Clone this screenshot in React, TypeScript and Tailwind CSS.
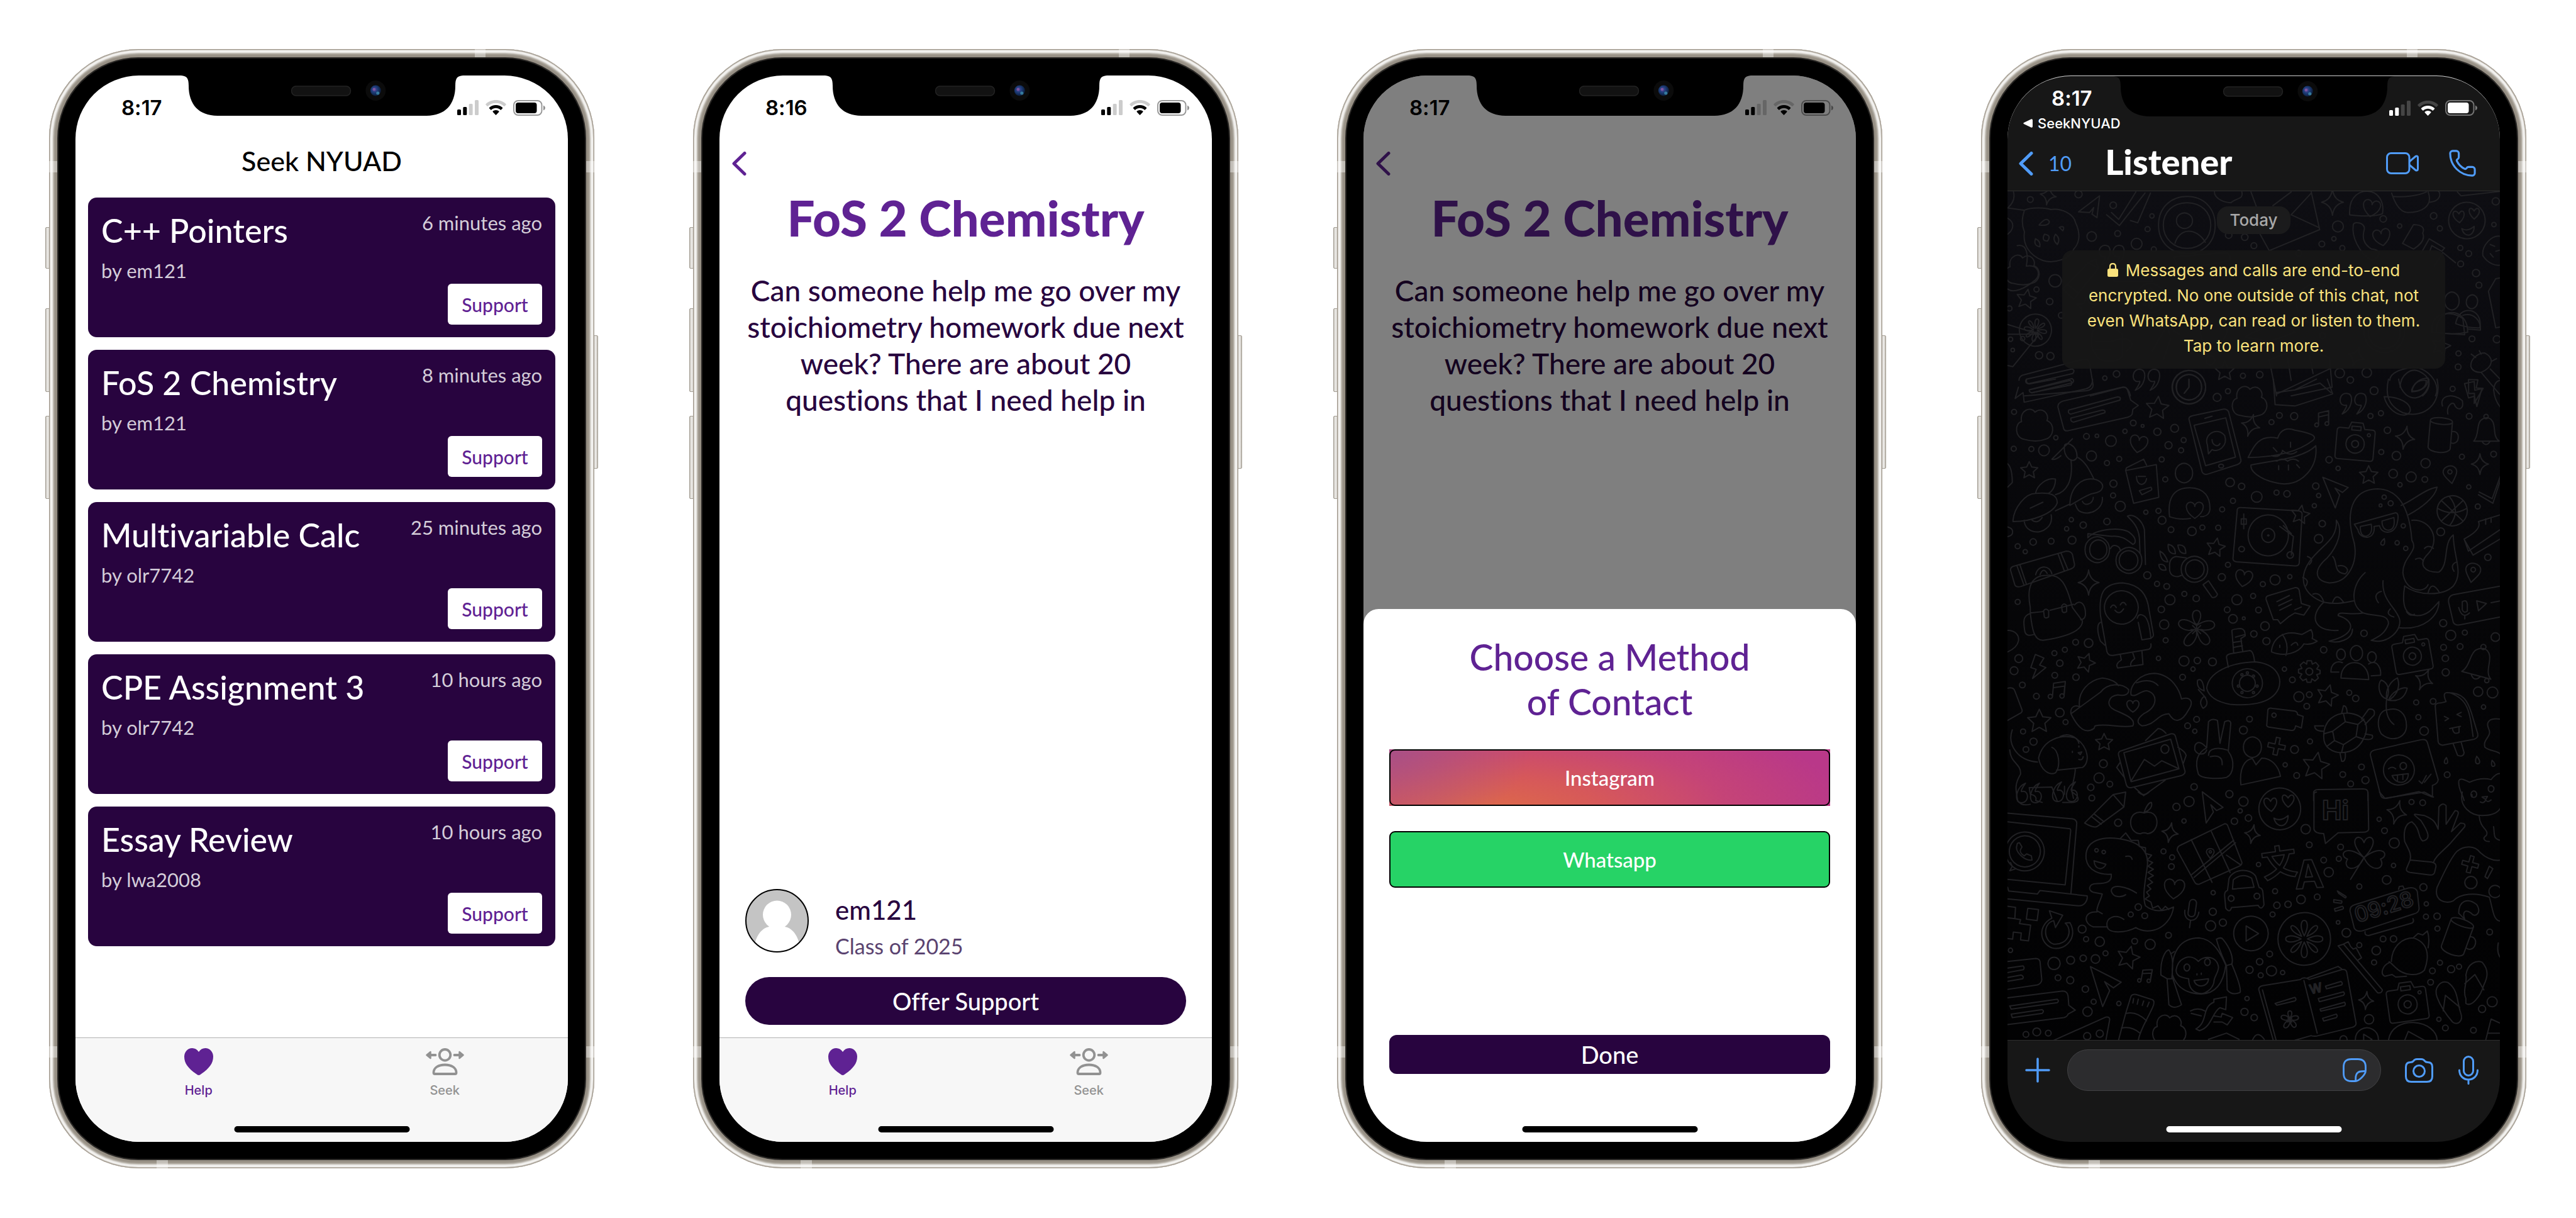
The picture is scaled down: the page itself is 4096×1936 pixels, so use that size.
import React from "react";
import { Phone } from "lucide-react";

/* ---------- Device ---------- */

function Notch() {
  return (
    <svg
      viewBox="0 0 449 65"
      className="absolute left-1/2 top-0 z-30 h-[65px] w-[448px] -translate-x-1/2"
      aria-hidden="true"
    >
      <defs>
        <radialGradient id="lens" cx="40%" cy="40%" r="65%">
          <stop offset="0" stopColor="#5a4a9a" />
          <stop offset="0.45" stopColor="#1c3c78" />
          <stop offset="1" stopColor="#0a1830" />
        </radialGradient>
      </defs>
      <path
        d="M0 0 C9 1 12 4 12 16 C12 46 28 64 58 64 H391 C421 64 437 46 437 16 C437 4 440 1 449 0 Z"
        fill="#000"
      />
      <rect x="176" y="17" width="94" height="15" rx="7" fill="#121212" stroke="#232323" strokeWidth="1.5" />
      <circle cx="310" cy="24" r="16" fill="#0b0b0b" />
      <circle cx="310" cy="24" r="8.5" fill="url(#lens)" />
      <circle cx="307.5" cy="22" r="2.4" fill="#8a5aa8" opacity="0.8" />
      <circle cx="313.5" cy="28" r="2.6" fill="#3f8fae" opacity="0.8" />
    </svg>
  );
}

function SideButton({ className }: { className: string }) {
  return (
    <span
      className={
        "absolute w-[8px] rounded-[2px] border border-[#a29c92] bg-gradient-to-r from-[#c9c5bd] via-[#f1f0ee] to-[#c4bfb6] " +
        className
      }
    />
  );
}

function Device({
  screenClass,
  indicatorClass,
  children,
}: {
  screenClass: string;
  indicatorClass: string;
  children: React.ReactNode;
}) {
  return (
    <section className="relative flex min-w-0 flex-col">
      <SideButton className="-left-[6px] top-[283px] h-[66px]" />
      <SideButton className="-left-[6px] top-[412px] h-[133px]" />
      <SideButton className="-left-[6px] top-[583px] h-[132px]" />
      <SideButton className="-right-[6px] top-[455px] h-[212px]" />
      <div className="relative flex flex-1 flex-col overflow-hidden rounded-[142px] bg-[#968f84] p-[13px] shadow-[inset_0_0_0_1px_#a39b90,inset_0_0_0_2px_#c5c0b8,inset_0_0_2px_6px_#f3f2f0,inset_0_0_3px_8px_#bdb8af]">
        <span className="absolute left-[677px] top-0 h-[13px] w-[17px] bg-white/40" />
        <span className="absolute bottom-0 left-[171px] h-[13px] w-[18px] bg-white/40" />
        <span className="absolute left-0 top-[178px] h-[18px] w-[13px] bg-white/40" />
        <span className="absolute right-0 top-[178px] h-[18px] w-[13px] bg-white/40" />
        <span className="absolute bottom-[176px] left-0 h-[18px] w-[13px] bg-white/40" />
        <span className="absolute bottom-[176px] right-0 h-[18px] w-[13px] bg-white/40" />
        <div className="relative flex flex-1 flex-col rounded-[129px] border-2 border-[#2a2826] bg-black p-[27px]">
          <div className={"relative flex flex-1 flex-col overflow-hidden rounded-[101px] " + screenClass}>
            <Notch />
            {children}
            <span
              className={
                "absolute bottom-[15px] left-1/2 z-30 h-[10px] w-[279px] -translate-x-1/2 rounded-full " + indicatorClass
              }
            />
          </div>
        </div>
      </div>
    </section>
  );
}

/* ---------- Status bar ---------- */

function StatusIcons() {
  return (
    <div className="flex items-center gap-[11px]" aria-hidden="true">
      <svg viewBox="0 0 34 24" className="h-[24px] w-[34px]" fill="currentColor">
        <rect x="0" y="15" width="6" height="9" rx="1.5" />
        <rect x="9.3" y="11" width="6" height="13" rx="1.5" />
        <rect x="18.6" y="6" width="6" height="18" rx="1.5" opacity="0.2" />
        <rect x="28" y="0" width="6" height="24" rx="1.5" opacity="0.2" />
      </svg>
      <svg viewBox="0 0 33 24" className="h-[24px] w-[33px]" fill="currentColor">
        <path
          d="M16.5 0 C10 0 4 2.6 .4 6.4 Q-.2 7 .4 7.6 L2.6 9.8 Q3.2 10.3 3.8 9.8 C7.2 6.5 11.6 4.7 16.5 4.7 S25.8 6.5 29.2 9.8 Q29.8 10.3 30.4 9.8 L32.6 7.6 Q33.2 7 32.6 6.4 C29 2.6 23 0 16.5 0Z"
          opacity="0.2"
        />
        <path d="M16.5 8 C12.5 8 8.8 9.5 6 12.1 Q5.4 12.7 6 13.3 L8.2 15.5 Q8.8 16 9.4 15.5 C11.4 13.7 13.8 12.7 16.5 12.7 S21.6 13.7 23.6 15.5 Q24.2 16 24.8 15.5 L27 13.3 Q27.6 12.7 27 12.1 C24.2 9.5 20.5 8 16.5 8Z" />
        <path d="M16.5 16 C14.7 16 13 16.7 11.7 17.8 Q11.1 18.4 11.7 19 L15.9 23.4 Q16.5 24 17.1 23.4 L21.3 19 Q21.9 18.4 21.3 17.8 C20 16.7 18.3 16 16.5 16Z" />
      </svg>
      <svg viewBox="0 0 51 25" className="h-[25px] w-[51px]" fill="currentColor">
        <rect x="1" y="1" width="44.5" height="23" rx="7" fill="none" stroke="currentColor" strokeWidth="2" opacity="0.4" />
        <rect x="4" y="4" width="33.5" height="17" rx="4" />
        <path d="M48 8.5 Q51 10 51 12.5 T48 16.5Z" opacity="0.45" />
      </svg>
    </div>
  );
}

function StatusBar({ time }: { time: string }) {
  return (
    <div className="flex h-[102px] items-center justify-between pl-[73px] pr-9 font-['Inter',sans-serif] text-black">
      <span className="text-[33px] leading-9 font-semibold">{time}</span>
      <StatusIcons />
    </div>
  );
}

/* ---------- Shared pieces ---------- */

function BackChevron() {
  return (
    <svg viewBox="0 0 23 38" className="h-[38px] w-[23px]" fill="none" stroke="currentColor" strokeWidth="5" strokeLinecap="round" strokeLinejoin="round" aria-hidden="true">
      <path d="M20 2.5 L3 19 L20 35.5" />
    </svg>
  );
}

function TabBar() {
  return (
    <nav className="grid grid-cols-2 border-t border-[#b2b2b2] bg-[#f7f7f7] pb-[70px] pt-4 font-['Inter',sans-serif] text-[20px] leading-6 font-medium">
      <button className="flex flex-col items-center gap-3 text-[#5f2293]">
        <svg viewBox="0 0 46 43" className="h-[43px] w-[46px]" fill="currentColor" aria-hidden="true">
          <path d="M23 43 C21.5 43 20.5 42 19 41 C6 32 0 24 0 13.5 C0 6 5.500 0 12.5 0 C17 0 20.5 2.3 23 6 C25.5 2.3 29 0 33.5 0 C40.5 0 46 6 46 13.5 C46 24 40 32 27 41 C25.5 42 24.5 43 23 43Z" />
        </svg>
        <span>Help</span>
      </button>
      <button className="flex flex-col items-center gap-3 text-[#929292]">
        <svg viewBox="0 0 61 43" className="h-[43px] w-[61px]" fill="none" stroke="currentColor" strokeWidth="3.8" strokeLinejoin="round" aria-hidden="true">
          <circle cx="30.5" cy="10.8" r="8.8" />
          <path d="M12.5 39 C12.5 31 20 26.5 30.5 26.5 S48.5 31 48.5 39 Q48.5 41 46.5 41 H14.5 Q12.5 41 12.5 39Z" />
          <path d="M15.5 11 H8 M45.5 11 H53" strokeLinecap="round" />
          <path d="M1.5 11 L7.5 6 V16Z M59.5 11 L53.5 6 V16Z" fill="currentColor" strokeWidth="2.5" />
        </svg>
        <span>Seek</span>
      </button>
    </nav>
  );
}

/* ---------- Screen 1: request list ---------- */

const requests = [
  { title: "C++ Pointers", by: "em121", when: "6 minutes ago" },
  { title: "FoS 2 Chemistry", by: "em121", when: "8 minutes ago" },
  { title: "Multivariable Calc", by: "olr7742", when: "25 minutes ago" },
  { title: "CPE Assignment 3", by: "olr7742", when: "10 hours ago" },
  { title: "Essay Review", by: "lwa2008", when: "10 hours ago" },
];

function RequestCard({ title, by, when }: { title: string; by: string; when: string }) {
  return (
    <li className="flex justify-between rounded-[14px] bg-[#28043f] px-[21px] pb-5 pt-[22px]">
      <div>
        <h2 className="text-[52px] leading-[60px] font-medium text-white">{title}</h2>
        <p className="mt-[16px] text-[31px] leading-9 text-[#d4cdd9]">by {by}</p>
      </div>
      <div className="flex flex-col items-end gap-[79px]">
        <time className="text-[31px] leading-9 text-[#d4cdd9]">{when}</time>
        <button className="flex h-[65px] w-[150px] items-center justify-center rounded-[6px] bg-white text-[30px] leading-9 font-medium text-[#5f2293]">
          Support
        </button>
      </div>
    </li>
  );
}

function ListScreen() {
  return (
    <Device screenClass="bg-white" indicatorClass="bg-black">
      <StatusBar time="8:17" />
      <h1 className="text-center text-[43px] leading-[67px] font-medium text-black">Seek NYUAD</h1>
      <ul className="flex flex-1 flex-col gap-5 px-5 pt-[25px]">
        {requests.map((r) => (
          <RequestCard key={r.title} {...r} />
        ))}
      </ul>
      <TabBar />
    </Device>
  );
}

/* ---------- Screen 2: request detail ---------- */

function DetailContent({ time }: { time: string }) {
  return (
    <>
      <StatusBar time={time} />
      <div className="px-5 pt-[19px]">
        <button aria-label="Back" className="flex text-[#5f2293]">
          <BackChevron />
        </button>
      </div>
      <h1 className="mt-[24px] text-center text-[78px] leading-[86px] font-black text-[#5f2293]">FoS 2 Chemistry</h1>
      <p className="mt-[44px] text-center text-[46px] leading-[58px] font-medium text-[#28043f]">
        Can someone help me go over my
        <br />
        stoichiometry homework due next
        <br />
        week? There are about 20
        <br />
        questions that I need help in
      </p>
    </>
  );
}

function Avatar() {
  return (
    <svg viewBox="0 0 101 101" className="h-[101px] w-[101px]" aria-hidden="true">
      <defs>
        <clipPath id="avatar-clip">
          <circle cx="50.5" cy="50.5" r="49" />
        </clipPath>
      </defs>
      <circle cx="50.5" cy="50.5" r="49.5" fill="#c4c4c4" />
      <g clipPath="url(#avatar-clip)" fill="#fff">
        <circle cx="50.5" cy="41" r="22.5" />
        <path d="M15.5 86 C19 70 30 60 40 60 H61 C71 60 82 70 85.5 86 V101 H15.5Z" />
      </g>
      <circle cx="50.5" cy="50.5" r="49.5" fill="none" stroke="#000" strokeWidth="2" />
    </svg>
  );
}

function DetailScreen() {
  return (
    <Device screenClass="bg-white" indicatorClass="bg-black">
      <DetailContent time="8:16" />
      <div className="flex-1" />
      <div className="flex items-start gap-[42px] px-[41px] pb-[29px]">
        <Avatar />
        <div className="flex flex-col gap-[13px] pt-2">
          <strong className="text-[42px] leading-[50px] font-medium text-[#28043f]">em121</strong>
          <span className="text-[34px] leading-10 text-[#5a4370]">Class of 2025</span>
        </div>
      </div>
      <div className="flex flex-col px-[41px] pb-5">
        <button className="h-[76px] rounded-full bg-[#28043f] text-[38px] leading-[44px] font-medium text-white">
          Offer Support
        </button>
      </div>
      <TabBar />
    </Device>
  );
}

/* ---------- Screen 3: contact sheet ---------- */

function ContactScreen() {
  return (
    <Device screenClass="bg-white" indicatorClass="bg-black">
      <DetailContent time="8:17" />
      <div className="absolute inset-0 z-10 bg-black/50" />
      <div
        role="dialog"
        aria-label="Choose a Method of Contact"
        className="absolute inset-x-0 bottom-0 z-20 flex h-1/2 flex-col rounded-t-[24px] bg-white px-[41px] pb-[108px] pt-[41px]"
      >
        <h2 className="text-center text-[57px] leading-[71px] font-medium text-[#5f2293]">
          Choose a Method
          <br />
          of Contact
        </h2>
        <div className="mt-[40px] flex flex-1 flex-col gap-10 text-[33px] leading-10 font-medium text-white">
          <button className="flex h-[90px] bg-[radial-gradient(ellipse_32%_150%_at_0%_0%,#a1528bcc,transparent),radial-gradient(ellipse_80%_210%_at_24%_115%,#de6b48_0%,#d6585a_32%,#c54477_66%,#b93889_100%)]">
            <span className="flex flex-1 items-center justify-center self-stretch rounded-[9px] border-2 border-black">
              Instagram
            </span>
          </button>
          <button className="h-[90px] rounded-[9px] border-2 border-black bg-[#26d366]">Whatsapp</button>
        </div>
        <button className="h-[62px] rounded-[12px] bg-[#28043f] text-[38px] leading-[44px] font-medium text-white">
          Done
        </button>
      </div>
    </Device>
  );
}

/* ---------- Screen 4: chat ---------- */

type Band = { sx: number; sy: number; tx: number; ty: number };
const TOP: Band = { sx: 0.5805, sy: 0.3628, tx: -59.8, ty: -243.8 };
const MID: Band = { sx: 0.572, sy: 0.42685, tx: -46.4, ty: 298.4 };
const LOW: Band = { sx: 0.572, sy: 0.3927, tx: -46.4, ty: 954.3 };

const starPath = (() => {
  let d = "";
  for (let i = 0; i < 10; i++) {
    const r = i % 2 ? 24 : 50;
    const a = (Math.PI / 5) * i - Math.PI / 2;
    d += (i ? "L" : "M") + (r * Math.cos(a)).toFixed(1) + " " + (r * Math.sin(a)).toFixed(1);
  }
  return d + "Z";
})();

const shapes: Record<string, string> = {
  star: starPath,
  sparkle: "M0 -60 Q6 -10 50 0 Q6 10 0 60 Q-6 10 -50 0 Q-6 -10 0 -60Z",
  heart: "M0 48 C-65 5 -52 -42 -24 -42 C-8 -42 0 -28 0 -18 C0 -28 8 -42 24 -42 C52 -42 65 5 0 48Z",
  cloud: "M-30 45 C-58 42 -58 -2 -38 -5 C-45 -38 -10 -50 0 -32 C22 -50 42 -25 34 -8 C58 0 55 40 28 45 C10 52 -12 50 -30 45Z",
  note: "M-28 35 A12 12 0 1 1 -28 34 V-40 L36 -55 V22 A12 12 0 1 1 35 20 V-30 L-26 -16",
  camera:
    "M-42 -32 H-20 L-14 -48 H16 L22 -32 H42 Q50 -32 50 -24 V42 Q50 50 42 50 H-42 Q-50 50 -50 42 V-24 Q-50 -32 -42 -32Z M24 8 A24 24 0 1 1 24 7.9Z M9 8 A9 9 0 1 1 9 7.9Z M38 -18 A4 4 0 1 1 38 -18.1Z M-12 -38 H12 V-28 H-12Z",
  bell: "M-45 40 C-25 20 -35 -20 -20 -35 C-5 -50 15 -50 25 -30 C35 -10 25 25 48 40Z M-14 42 Q0 62 14 42 M8 -50 A8 8 0 1 1 8 -50.1Z",
  pin: "M0 60 C-30 20 -45 0 -45 -18 C-45 -70 45 -70 45 -18 C45 0 30 20 0 60Z M14 -18 A14 14 0 1 1 14 -18.1Z",
  mug: "M-40 -45 C-40 -60 30 -60 30 -45 C30 -32 -40 -32 -40 -45Z M-40 -45 V40 C-35 58 25 58 30 40 V-45 M30 -15 C60 -25 60 30 30 20",
  bolt: "M-25 -60 L20 -50 L5 -12 L38 -5 L-18 60 L-8 12 L-36 8Z",
  plane: "M-35 -60 L45 0 L20 12 L-2 -10 L8 18 L-20 60Z",
  quote: "M-10 -30 C-50 -45 -55 20 -22 12 C-15 10 -22 25 -36 45 C0 30 8 -20 -10 -30Z M45 -30 C5 -45 0 20 33 12 C40 10 33 25 19 45 C55 30 63 -20 45 -30Z",
  flower: "M0 -10 C-35 -60 35 -60 0 -10 C50 -45 65 10 8 0 C60 25 15 65 2 8 C-10 65 -60 35 -8 2 C-65 5 -50 -50 0 -10Z M-14 0 H14 M0 -14 V14 M-10 -10 L10 10 M10 -10 L-10 10",
  person: "M22 -40 A22 27 0 1 1 22 -40.1Z M-48 55 C-48 -25 48 -25 48 55 Q0 65 -48 55Z",
  wheel: "M50 0 A50 50 0 1 1 50 -.1Z M0 -6 C-20 -45 20 -45 0 -6Z M0 6 C-20 45 20 45 0 6Z M-6 0 C-45 -20 -45 20 -6 0Z M6 0 C45 -20 45 20 6 0Z M-5 -5 C-20 -42 -42 -20 -5 -5Z M5 5 C20 42 42 20 5 5Z M5 -5 C42 -20 20 -42 5 -5Z M-5 5 C-42 20 -20 42 -5 5Z",
  mic: "M-14 -40 C-14 -60 14 -60 14 -40 V0 C14 18 -14 18 -14 0Z M-28 -8 C-28 40 28 40 28 -8 M0 30 V58",
  smile: "M50 0 A50 50 0 1 1 50 -.1Z M-14 22 Q2 32 20 16 C20 46 -8 48 -14 22Z M-20 6 C-52 -14 -34 -38 -22 -18 C-12 -38 4 -16 -20 6Z M20 -4 C-4 -24 8 -44 20 -26 C30 -44 46 -24 20 -4Z",
  car: "M-46 30 V0 Q-46 -10 -38 -12 L-32 -40 C-20 -62 20 -62 32 -40 L38 -12 Q46 -10 46 0 V30 Q38 44 32 30 H-32 Q-38 44 -46 30Z M-26 -14 L-22 -36 Q0 -52 22 -36 L26 -14Z M-24 8 A7 7 0 1 1 -24 7.9Z M38 8 A7 7 0 1 1 38 7.9Z",
  play: "M50 0 A50 50 0 1 1 50 -.1Z M-14 -22 L22 0 L-14 22Z",
  clock: "M50 0 A50 50 0 1 1 50 -.1Z M38 0 A38 38 0 1 1 38 -.1Z M0 -24 V0 L-14 18",
  ring: "M50 0 A50 50 0 1 1 50 -.1Z M40 0 A40 40 0 1 1 40 -.1Z",
  gear: "M-10 -50 H10 L14 -34 L30 -42 L44 -26 L34 -12 L50 -6 V10 L34 14 L42 30 L26 44 L12 34 L8 50 H-10 L-14 34 L-30 42 L-44 26 L-34 12 L-50 6 V-10 L-34 -14 L-42 -30 L-26 -44 L-12 -34Z M16 0 A16 16 0 1 1 16 -.1Z",
  ball: "M50 0 A50 50 0 1 1 50 -.1Z M-36 -34 L36 34 M36 -34 L-36 34 M-10 -48 Q30 0 -8 48 M-48 -8 Q0 20 48 -8",
  plus: "M-10 -45 H10 V-12 H44 V10 H12 V45 H-10 V12 H-44 V-10 H-10Z",
  drop: "M0 -50 C30 -5 38 45 0 45 C-38 45 -30 -5 0 -50Z",
  apple: "M0 -22 C-60 -40 -60 50 -12 50 Q0 44 12 50 C60 45 55 -40 0 -22Z M0 -24 C10 -50 20 -60 26 -58 C30 -40 15 -28 0 -24",
  clover: "M0 0 C-50 -50 -10 -70 0 -40 C10 -70 50 -50 0 0 C50 -40 70 -5 44 4 C60 30 20 45 0 0 C-20 45 -60 30 -44 4 C-70 -5 -50 -40 0 0 L-36 58",
};

/* [shape, x, y, width, rotation] */
type Item = [string, number, number, number, number];

const topItems: Item[] = [
  ["sparkle", 215, 690, 44, 10], ["plane", 335, 750, 60, 60], ["sparkle", 993, 720, 60, 0],
  ["smile", 1361, 800, 100, 0], ["heart", 1128, 872, 50, -10], ["heart", 1100, 745, 50, 10],
  ["star", 155, 1145, 56, 10], ["wheel", 180, 1280, 88, 10], ["quote", 385, 945, 70, 0],
  ["quote", 480, 1490, 74, 0], ["star", 698, 1460, 56, 0], ["clock", 600, 1530, 92, 0],
  ["sparkle", 1058, 1395, 46, 20], ["star", 1290, 1350, 54, 15], ["bolt", 1385, 1545, 56, -10],
  ["cloud", 145, 1010, 90, 0], ["person", 1320, 1210, 90, 0], ["person", 1370, 1200, 70, 10],
  ["star", 320, 1180, 56, 0], ["wheel", 495, 1140, 80, 0], ["ring", 950, 1165, 110, 0], ["ring", 1135, 1290, 110, 0],
];
const midItems: Item[] = [
  ["star", 498, 108, 66, 5], ["cloud", 158, 165, 98, 0], ["cloud", 755, 78, 94, 0], ["clock", 586, 30, 92, 0],
  ["sparkle", 757, 172, 52, 15], ["note", 958, 150, 44, 0], ["quote", 1038, 85, 74, 0], ["bolt", 1380, 52, 60, -25],
  ["camera", 1048, 230, 106, 5], ["sparkle", 1186, 218, 54, 10], ["mug", 1288, 210, 88, 5], ["bell", 1411, 190, 76, 0],
  ["sparkle", 1394, 316, 48, 0], ["heart", 446, 240, 52, 10], ["star", 142, 340, 50, 0], ["star", 1085, 358, 54, 0],
  ["pin", 1312, 355, 42, -10], ["plane", 995, 415, 76, -15], ["ball", 1317, 490, 84, 0], ["heart", 602, 486, 50, 0],
  ["star", 895, 505, 54, 10], ["star", 660, 627, 54, 10], ["heart", 738, 740, 50, 10],
  ["sparkle", 307, 757, 58, 0], ["pin", 1374, 720, 46, 10], ["flower", 607, 932, 112, 0], ["bolt", 167, 1072, 56, 10],
  ["star", 299, 1055, 54, 20], ["note", 222, 1160, 50, 5], ["star", 170, 1274, 68, 0], ["star", 350, 1352, 50, 0],
  ["gear", 920, 1088, 60, 0], ["camera", 1205, 1020, 104, -10], ["bell", 1392, 1055, 90, 15], ["sparkle", 1239, 1118, 52, 25],
  ["star", 970, 1178, 62, 15], ["star", 938, 1440, 78, 10], ["plus", 829, 1366, 54, 12],
  ["heart", 430, 1216, 36, 0], ["drop", 1300, 1420, 18, 5], ["drop", 1387, 1418, 22, -10], ["drop", 1430, 1430, 18, -15],
  ["drop", 1125, 606, 20, 20],
];
const lowItems: Item[] = [
  ["quote", 145, 10, 70, 180], ["quote", 245, 5, 70, 180], ["apple", 461, 110, 80, 0], ["sparkle", 533, 164, 46, 10],
  ["sparkle", 762, 170, 44, 10], ["plane", 648, 62, 72, 0], ["smile", 838, 68, 116, 0], ["sparkle", 1163, 82, 56, 15],
  ["heart", 545, 390, 60, 5], ["mic", 593, 490, 70, 8], ["car", 738, 412, 116, -5], ["play", 758, 572, 96, 0],
  ["wheel", 906, 594, 146, 0], ["clover", 1072, 265, 104, 0], ["star", 417, 670, 66, 15], ["note", 466, 746, 40, 10],
  ["plane", 355, 780, 96, -10], ["cloud", 532, 955, 90, 0], ["flower", 866, 922, 54, 0], ["sparkle", 1078, 843, 42, 5],
  ["camera", 1192, 846, 110, -8], ["mug", 1335, 590, 94, 20], ["play", 1080, 1000, 64, 0], ["plus", 1367, 292, 52, 15],
  ["ring", 130, 240, 108, 0], ["pin", 645, 248, 24, 0],
];

/* [x, y, radius] triples */
const topDots = [
  [166, 708, 8], [298, 685, 10], [393, 733, 9], [499, 780, 6], [487, 838, 7], [405, 857, 8], [334, 870, 13], [457, 902, 15],
  [504, 926, 7], [709, 864, 9], [753, 873, 9], [778, 910, 8], [1008, 826, 15], [1132, 793, 9], [1177, 824, 6], [1270, 780, 9],
  [1287, 835, 7], [1440, 716, 10], [1435, 818, 6], [964, 903, 8], [1020, 921, 7], [997, 880, 6], [1343, 920, 7], [1366, 945, 8],
  [1344, 990, 8], [1394, 1083, 8], [1386, 1030, 10], [234, 1064, 17], [183, 1102, 7], [219, 1155, 9], [251, 1215, 8],
  [109, 1185, 7], [190, 1390, 10], [221, 1394, 10], [145, 1317, 6], [118, 1367, 5], [370, 1490, 6], [402, 1472, 9],
  [748, 1480, 7], [794, 1475, 9], [1013, 1468, 13], [1087, 1466, 13], [1042, 1498, 9], [1375, 1318, 8], [1443, 1320, 10],
  [1337, 1441, 8], [1338, 1382, 7], [1322, 1537, 7], [901, 943, 8], [659, 1412, 12], [966, 1305, 8], [112, 1320, 6],
];
const midDots = [
  [100, 122, 7], [664, 68, 11], [694, 45, 7], [431, 163, 8], [457, 174, 4], [408, 194, 6], [498, 196, 10], [546, 183, 11],
  [571, 227, 7], [529, 246, 10], [564, 265, 7], [216, 218, 6], [301, 213, 8], [330, 211, 5], [369, 230, 15], [183, 265, 15],
  [148, 260, 7], [99, 259, 7], [315, 286, 14], [392, 297, 7], [358, 312, 7], [510, 299, 7], [837, 135, 8], [878, 138, 10],
  [815, 160, 7], [1100, 43, 11], [1090, 137, 7], [1119, 127, 7], [1137, 190, 9], [1120, 271, 7], [1162, 285, 12],
  [1364, 138, 8], [975, 300, 9], [1000, 332, 6], [1243, 313, 13], [1344, 289, 7], [1432, 279, 8], [1153, 352, 12],
  [1203, 364, 14], [1241, 373, 8], [1172, 393, 6], [700, 384, 12], [732, 399, 9], [774, 438, 15], [829, 422, 7], [858, 427, 9],
  [708, 453, 7], [678, 485, 7], [520, 373, 7], [376, 389, 10], [375, 433, 7], [395, 473, 14], [466, 495, 6], [501, 490, 7],
  [511, 525, 11], [536, 560, 8], [594, 566, 12], [623, 552, 7], [667, 553, 7], [358, 530, 9], [259, 523, 6], [292, 543, 9],
  [246, 557, 6], [153, 606, 9], [203, 603, 8], [261, 599, 11], [110, 622, 7], [131, 642, 6], [938, 398, 9], [946, 433, 6],
  [934, 471, 6], [956, 538, 9], [946, 594, 12], [1363, 401, 6], [1388, 474, 7], [1285, 568, 11], [1416, 663, 9],
  [694, 691, 7], [677, 737, 10], [791, 763, 7], [825, 747, 14], [866, 735, 6], [470, 730, 10], [497, 762, 7], [524, 771, 8],
  [533, 821, 14], [573, 799, 7], [606, 816, 9], [509, 857, 9], [719, 821, 14], [764, 807, 7], [692, 858, 8], [779, 859, 8],
  [708, 892, 12], [738, 890, 4], [517, 913, 13], [521, 972, 7], [797, 919, 12], [766, 948, 9], [801, 975, 10], [110, 829, 7],
  [271, 979, 8], [307, 982, 12], [241, 1007, 7], [212, 1020, 7], [113, 1040, 11], [227, 1057, 9], [100, 1085, 11],
  [213, 1102, 8], [272, 1109, 9], [123, 1138, 8], [162, 1180, 8], [227, 1241, 12], [243, 1276, 7], [125, 1311, 7],
  [154, 1349, 10], [133, 1378, 8], [501, 1039, 6], [572, 1049, 14], [609, 1047, 9], [651, 1052, 11], [597, 1079, 6],
  [568, 1109, 8], [851, 1079, 6], [873, 1119, 8], [960, 1007, 9], [891, 1182, 14], [920, 1174, 8], [913, 1217, 8],
  [1031, 1167, 7], [1049, 1188, 9], [1293, 998, 8], [1339, 995, 8], [1298, 1039, 9], [1299, 1091, 10], [1413, 1122, 6],
  [1389, 1163, 13], [1429, 1166, 15], [1217, 1203, 7], [1264, 1199, 8], [1223, 1258, 7], [1404, 1220, 6], [1239, 1309, 12],
  [1313, 953, 14], [1352, 943, 7], [1437, 960, 12], [1292, 908, 10], [754, 1265, 8], [737, 1306, 11], [607, 1266, 8],
  [582, 1290, 8], [602, 1310, 6], [879, 1378, 11], [853, 1435, 6], [922, 1348, 7], [885, 1475, 8], [348, 1431, 11],
  [336, 1484, 14], [366, 1507, 8], [313, 1519, 9], [600, 1517, 9], [1065, 1443, 8], [1013, 1471, 8], [1035, 1506, 8],
  [1076, 1492, 10], [1303, 1472, 8], [1128, 439, 6], [1146, 462, 7], [1118, 470, 4], [1181, 546, 6], [1164, 609, 6], [1188, 630, 6],
  [723, 1142, 3], [775, 1142, 3], [733, 1166, 3], [765, 1166, 3], [733, 1100, 3], [765, 1105, 3], [748, 1093, 3], [1072, 946, 9],
];
const lowDots = [
  [389, 124, 10], [586, 38, 14], [551, 60, 10], [572, 117, 6], [737, 38, 13], [728, 76, 6], [751, 105, 9], [712, 118, 9],
  [698, 8, 10], [316, 24, 8], [910, 150, 13], [1129, 156, 8], [1156, 206, 14], [1204, 40, 7], [1235, 43, 8], [1114, 110, 6],
  [515, 240, 7], [539, 264, 7], [537, 301, 8], [920, 213, 8], [960, 275, 8], [1007, 222, 8], [1002, 270, 7], [974, 324, 13],
  [779, 293, 6], [1154, 297, 6], [1135, 355, 12], [1237, 385, 10], [1059, 382, 7], [825, 401, 7], [653, 407, 6],
  [897, 434, 12], [942, 424, 8], [861, 454, 9], [830, 458, 9], [818, 495, 7], [652, 484, 10], [646, 541, 14], [680, 528, 10],
  [445, 465, 9], [424, 495, 7], [463, 500, 8], [289, 554, 11], [300, 595, 7], [338, 605, 13], [435, 603, 8], [478, 616, 14],
  [529, 579, 8], [354, 652, 7], [326, 675, 12], [292, 672, 9], [257, 680, 11], [211, 693, 17], [222, 751, 8], [256, 761, 10],
  [90, 640, 6], [298, 797, 9], [321, 848, 7], [391, 855, 6], [304, 888, 13], [303, 987, 10], [338, 977, 10], [133, 980, 8],
  [163, 970, 11], [195, 975, 8], [747, 835, 6], [740, 889, 10], [767, 912, 9], [782, 686, 9], [810, 655, 8], [754, 719, 10],
  [815, 723, 14], [785, 741, 7], [846, 730, 6], [1000, 527, 5], [1023, 569, 12], [1106, 641, 12], [1100, 689, 7],
  [1125, 594, 8], [1154, 594, 9], [1059, 619, 7], [1245, 452, 6], [1244, 504, 7], [1275, 502, 9], [1276, 552, 7],
  [1283, 690, 7], [1262, 723, 8], [1314, 716, 10], [1336, 706, 7], [1257, 769, 8], [1421, 566, 8], [1428, 848, 14],
  [1400, 877, 10], [1280, 919, 6], [1298, 954, 8], [1376, 963, 8], [1086, 919, 13], [1015, 1000, 10], [1369, 366, 17],
  [1436, 402, 17],
];

const topPaths = [
  "M104 745 L150 755 C170 740 210 745 222 752 C250 745 285 770 290 810 C305 860 300 900 285 925 C275 970 230 990 200 975 C160 950 145 900 150 850 C140 810 145 780 150 755",
  "M190 820 q20 -40 28 -15 q0 20 -28 15Z M205 860 q20 5 8 30 q-18 0 -8 -30Z M235 860 q15 20 5 45 q-15 -20 -5 -45Z M180 880 q15 10 12 35 q-18 -5 -12 -35Z M245 830 q18 -10 10 15Z",
  "M375 775 L410 822 L480 680 M388 765 L408 795 L455 675 M440 800 L460 810 L495 680",
  "M595 695 C640 695 672 745 672 820 C672 895 640 945 595 945 C550 945 517 895 517 820 C517 745 550 695 595 695Z",
  "M595 722 C635 722 660 765 660 820 C660 880 630 922 595 922 C560 922 530 880 530 820 C530 765 555 722 595 722Z M610 802 A22 34 0 1 1 610 800Z M562 900 C575 830 620 830 645 895",
  "M670 675 C670 700 690 720 715 722 C730 700 750 710 745 675 M770 675 L785 740 M935 675 L958 840 L820 932 L795 860 M880 775 L935 680 M880 775 L955 830 M830 735 L880 675",
  "M1040 760 C1040 690 1070 670 1090 672 C1120 675 1135 720 1130 770 C1110 785 1060 780 1040 775Z",
  "M1155 680 C1165 730 1180 765 1200 765 C1235 765 1270 740 1255 675 M1260 720 C1290 715 1290 680 1283 672 M1160 695 C1190 700 1230 690 1250 675",
  "M1050 820 C1045 870 1065 940 1100 975 C1125 960 1130 930 1100 925 C1075 900 1075 870 1080 840 C1085 810 1050 800 1050 820Z",
  "M1455 870 C1430 860 1400 910 1405 955 C1420 990 1440 1000 1455 995 M1425 905 l12 8 M1440 935 l10 -5 M1425 945 l8 15",
  "M255 1100 L325 985 L352 1010 L285 1145 Z M268 1080 L298 1118 M325 985 L345 970 L352 1010",
  "M560 960 L700 940 Q715 945 712 975 L570 1020Z M390 1010 H500 V1065 H395Z",
  "M335 1300 C330 1260 400 1255 418 1300 V1395 C400 1430 350 1420 345 1385 C330 1360 335 1330 335 1300Z M345 1330 H385 M345 1365 H385 M385 1330 C440 1300 460 1340 430 1370",
  "M500 1370 L540 1260 L575 1300 M520 1280 L540 1255 L548 1300 M530 1410 L550 1320",
  "M104 1255 L190 1298 L118 1440 L104 1435 M104 1298 L190 1298",
  "M135 1500 Q135 1480 150 1475 L310 1408 Q325 1405 328 1425 L338 1520 Q338 1540 320 1545 L150 1568 M155 1495 L280 1450 Q290 1455 282 1470 L160 1515 Q150 1510 155 1495Z M165 1540 L280 1492 Q288 1500 282 1510 L170 1555",
  "M330 1568 L420 1530 Q435 1530 440 1568",
  "M820 1410 L900 1360 L985 1400 L992 1530 L880 1568 M820 1410 L840 1568 M870 1400 L880 1500 M930 1390 L940 1470 M840 1560 L985 1450",
  "M1150 1500 C1150 1465 1180 1450 1215 1442 C1260 1450 1290 1520 1275 1568 M1178 1530 C1180 1470 1210 1445 1230 1460 C1270 1490 1260 1540 1240 1568 M1210 1540 C1220 1500 1240 1490 1255 1490 C1255 1530 1235 1550 1210 1550Z",
  "M1372 1440 C1370 1400 1395 1380 1410 1380 C1435 1400 1435 1440 1400 1465 C1385 1465 1375 1455 1372 1440Z M1400 1465 L1450 1560 M1425 1450 L1455 1500 M1385 1400 l-12 -15 M1400 1385 l-5 -15 M1430 1415 l12 -10",
  "M1265 1290 C1260 1200 1320 1190 1350 1230 L1355 1300Z M1350 1215 C1380 1200 1400 1240 1398 1280 L1365 1275",
  "M1420 1110 L1440 1055 L1455 1050 M1420 1110 L1440 1270 L1455 1265",
  "M1335 675 L1345 692 L1455 672 M1185 900 L1215 818 Q1250 820 1240 855 Q1250 890 1215 925Z",
  "M1235 945 L1258 880 L1300 920 L1292 935 L1265 910 L1258 940 M1272 1000 L1295 940 L1330 985",
  "M104 790 C125 810 120 840 104 860 M120 675 C125 705 115 730 104 745",
  "M130 910 C160 900 160 960 155 1000 C190 990 195 1040 180 1060 C150 1100 120 1120 104 1100",
  "M640 1330 C620 1290 640 1210 680 1260 C700 1200 720 1280 690 1330Z M755 1310 C790 1270 870 1230 890 1290 L820 1330Z",
];
const midPaths = [
  "M103 72 L125 50 L128 86 L300 36 Q318 30 318 0 M103 72 L112 30 M135 0 Q132 15 142 18 L215 0 M142 40 L255 5 Q265 10 258 22 L150 50 Q142 50 142 40Z",
  "M222 105 Q220 90 235 82 L400 30 Q412 27 415 40 L424 78 L445 98 L430 112 L428 130 Q425 138 415 142 L250 192 Q240 194 238 185Z",
  "M252 115 L388 66 Q398 66 394 78 L258 130 Q248 128 252 115Z M258 145 L345 115 Q355 115 352 125 L265 160 Q256 158 258 145Z",
  "M586 150 Q584 140 596 136 L680 112 Q692 110 696 122 L730 300 Q732 312 720 318 L636 354 Q626 356 622 344Z M600 172 L688 144 L715 290 L632 322Z M682 324 A7 7 0 1 1 682 323Z M630 146 L650 138",
  "M640 278 L637 245 C625 205 665 175 685 210 C695 250 665 275 650 262Z M650 225 C650 245 665 255 672 240",
  "M750 292 C765 250 780 205 832 220 C840 185 860 180 880 190 C920 200 945 210 930 228 C890 270 830 290 750 292Z M938 248 C945 330 900 390 850 390 C800 385 755 350 758 320 C800 305 900 300 938 248Z M815 285 q20 10 30 -15 M845 265 q20 25 40 5 M830 305 q15 -15 30 0 q15 -15 30 0 M835 322 v15 M862 320 v18 M885 318 l8 12 M820 255 l10 15 M868 235 v18",
  "M410 340 L495 318 L502 440 L432 462Z M410 340 L412 330 L460 298 L468 320 M440 362 C440 400 465 400 468 370 M445 362 l20 0 M448 415 L480 402 q5 8 0 12 L455 430Z",
  "M596 350 A24 36 0 1 1 596 349Z M532 512 C525 440 545 404 588 404 C630 405 645 440 644 485 C642 505 630 512 618 512 M532 512 Q560 525 590 518",
  "M205 298 L262 222 M205 298 Q215 302 230 285 M240 250 C240 230 275 240 275 290 C265 320 235 290 240 250Z M278 292 C300 310 310 340 322 372 M258 300 C265 380 245 420 215 430 M97 525 C100 480 130 425 160 425 C200 420 220 430 220 460 C210 500 150 530 97 530Z M160 422 C165 395 190 365 215 372 C215 400 205 420 195 425 M145 480 L180 458 M255 470 C255 400 290 360 330 375 C355 390 350 420 320 425 C300 430 270 460 255 470Z M345 440 C350 480 310 515 280 490 C272 478 272 470 270 465 M320 440 C320 465 295 475 290 455 M128 525 C130 570 170 580 190 555 C205 540 205 520 203 505 M215 490 L255 465 M150 525 q15 15 28 -10",
  "M365 635 A34 48 0 1 1 365 634Z M358 635 A24 36 0 1 1 358 634Z M455 675 A36 48 0 1 1 455 674Z M444 675 A26 36 0 1 1 444 674Z M305 590 C330 555 400 550 420 570 C440 590 440 610 430 615 C415 600 400 580 370 585 L305 575Z M415 510 C430 500 455 520 462 560 L465 690 M415 510 C430 530 445 550 448 590 L450 650 M368 630 C375 610 395 620 395 640",
  "M720 485 Q722 476 732 478 L890 490 Q900 492 900 502 L892 685 Q890 696 880 695 L718 680 Q708 678 708 668Z M862 582 A56 76 0 1 1 862 581Z M824 582 A18 26 0 1 1 824 581Z M808 582 A2 2 0 1 1 808 581Z M838 548 L876 585 L870 655 M848 545 L870 575 M876 655 A9 12 0 1 1 876 654Z M738 502 v55 M731 520 h14 v20 h-14Z M740 633 A8 10 0 1 1 740 632Z",
  "M1045 610 C1020 500 1035 410 1110 408 C1180 410 1200 510 1205 600 C1225 640 1180 660 1180 720 C1185 790 1240 800 1250 765 M1045 540 L1160 497 Q1170 500 1165 530 C1160 580 1120 580 1115 545 L1100 548 C1105 600 1060 600 1055 560Z M1062 548 L1092 540 Q1098 580 1075 585 Q1060 580 1062 548Z M1122 528 L1155 515 Q1160 560 1140 562 Q1122 560 1122 528Z",
  "M1175 470 C1210 450 1240 410 1275 402 C1270 440 1230 480 1195 505 M1205 525 C1260 520 1285 600 1250 650 C1220 690 1240 720 1280 718 C1310 690 1290 610 1320 580 C1320 660 1350 720 1320 770 C1290 810 1220 805 1185 770",
  "M1045 610 C1055 680 1030 760 975 758 C935 750 930 710 970 665 C1000 620 1015 560 995 525 C1000 600 950 620 920 680 C890 740 900 800 960 830 C1000 840 1020 830 1045 825 M985 660 C1000 680 985 720 1020 725 C1035 710 1020 690 1000 695",
  "M1075 720 C1040 760 1030 840 1070 870 C1100 885 1140 870 1140 910 C1130 950 1110 960 1092 972 C1140 990 1180 930 1170 890 C1160 850 1120 820 1125 750 M1070 870 C1030 880 1000 860 1000 880 C1050 900 1050 950 975 975 C1000 985 1040 970 1040 930 M960 830 C920 880 930 940 1000 935 M1185 770 C1175 850 1190 880 1220 880 C1250 880 1265 850 1280 828 C1280 880 1240 935 1170 925",
  "M915 660 q20 10 5 30 M902 738 q20 10 8 32 M930 800 q20 -10 30 28 M985 830 q10 -40 30 0 M1120 790 q-25 10 -8 42 M1145 855 q-15 20 10 30 M1240 630 q10 -15 25 0 M1215 670 q15 -10 22 8 M1330 680 q-20 10 -8 35 M1250 795 q10 -50 32 0 M1190 865 q10 20 22 10",
  "M1390 530 L1450 505 M1390 530 Q1400 560 1350 595 L1362 640 L1450 560 M1352 600 L1375 655 L1450 595 M1410 520 v20 M1425 515 v18",
  "M1390 430 L1430 462 L1451 375 M1392 420 L1428 445 L1451 360",
  "M90 710 Q90 698 102 695 L245 640 Q258 640 262 652 L268 690 Q268 702 258 706 L118 772 Q105 776 102 765Z M108 695 L128 768 M116 690 L134 762 M222 650 L240 715 M230 646 L250 710 M160 728 C165 690 200 690 205 725 M172 728 q8 -30 20 -5",
  "M145 850 C135 780 145 730 190 730 C230 725 245 760 262 850 L290 900 C290 940 240 960 180 972 C155 972 150 930 145 870Z M145 870 L180 865 M200 860 L265 838 M182 862 Q188 850 196 862 L196 885 Q188 892 184 885Z M232 845 Q238 830 246 842 L246 865 Q238 872 234 865Z M145 872 C125 880 125 900 130 940 Q135 960 155 950 M268 840 C285 815 300 840 298 880 Q295 895 285 895",
  "M340 880 C335 800 345 760 402 758 C450 765 470 800 475 860 L487 950 Q488 960 478 965 M340 880 L358 1015 Q362 1030 375 1028 L475 1005 Q482 1000 480 985 M445 850 A47 62 0 1 1 445 849Z M442 890 Q445 870 460 880 Q475 890 480 965 L455 970 L445 905 M340 905 C330 910 330 940 340 975 L352 990 M368 850 q8 -18 16 0 M395 840 q8 -18 16 0 M380 860 Q392 880 404 855 M395 1025 L398 1045 Q380 1060 388 1075 L458 1062 L455 1010 M430 1020 L435 1040 Q420 1055 425 1068",
  "M505 640 q15 10 22 40 q-20 0 -22 -40Z M528 615 q20 5 20 35 q-22 0 -20 -35Z M555 618 q22 -5 22 30 q-18 5 -22 -30Z M502 690 q18 -5 20 20 q-18 5 -20 -20Z M578 665 L550 660 Q530 665 532 700 Q530 735 555 735 L565 730 M638 708 A37 48 0 1 1 638 707Z M628 708 A26 35 0 1 1 628 707Z M625 765 L640 750 L665 800 Q662 815 650 812Z",
  "M800 820 Q798 808 808 805 L880 776 Q890 775 892 786 L898 835 L922 845 L905 878 L880 870 L862 885 L840 910 L832 895 L820 895Z M830 828 L865 805 M835 843 L872 820 M838 860 L870 838 M880 858 L898 848",
  "M1307 830 Q1305 808 1320 802 L1451 770 M1307 830 L1320 905 Q1325 918 1340 914 L1451 885 M1345 828 q12 -10 14 10 v25 q-10 10 -14 -5Z M1335 850 q10 45 30 20 M1352 880 v12 M1385 825 L1412 835 L1390 862Z M1425 832 L1451 825",
  "M815 1010 C820 960 850 940 880 945 L900 950 L925 932 Q932 950 928 965 L942 975 Q925 990 905 985 C890 1020 850 1035 815 1015Z M845 950 Q865 985 855 1028 M838 990 v8 M870 990 Q885 970 888 990",
  "M705 935 Q705 930 730 928 Q742 930 742 955 L730 965 L735 1012 M705 935 L710 1018 M715 960 L742 950 M708 980 L732 975 M710 998 L734 992 M690 1035 Q690 1025 700 1022 L755 1010 Q765 1012 768 1052 M690 1035 L695 1072 M635 1150 C640 1090 700 1055 770 1052 C830 1060 845 1110 835 1150 C815 1215 740 1215 700 1210 C660 1200 640 1180 635 1150Z M790 1132 A42 54 0 1 1 790 1131Z M770 1132 A22 30 0 1 1 770 1131Z M610 1120 Q625 1110 628 1160 Q605 1150 610 1120Z M625 1225 Q610 1200 628 1180 Q645 1210 625 1225Z M612 1155 L632 1185",
  "M1068 1020 A17 28 0 1 1 1068 1019Z M1008 1112 C1008 1035 1085 1035 1085 1118Z M980 1090 C980 1060 995 1045 1012 1055 M980 1090 L1002 1090 M1085 1060 C1110 1040 1120 1080 1118 1102 L1092 1104 M1020 1025 A12 20 0 1 1 1020 1024Z M1106 1035 A12 20 0 1 1 1106 1034Z",
  "M258 1245 C255 1220 270 1210 282 1220 C275 1160 310 1120 345 1112 C370 1115 385 1130 390 1140 M340 1165 C360 1130 400 1130 418 1155 C420 1175 405 1180 388 1175 C360 1180 355 1215 378 1230 C400 1245 440 1260 430 1290 C400 1300 360 1280 325 1290 L322 1300 C300 1320 280 1305 258 1245Z M425 1175 C420 1140 450 1095 490 1095 C540 1100 560 1160 565 1190 C590 1180 600 1200 585 1230 C565 1280 545 1280 530 1245 C500 1245 490 1290 455 1290 C440 1280 440 1265 460 1245 C500 1220 500 1170 470 1160 C455 1155 440 1185 425 1175Z M440 1130 Q480 1110 500 1140",
  "M802 1285 L805 1230 Q808 1222 818 1225 L880 1235 Q888 1238 887 1248 L903 1255 L898 1298 L882 1290 Q880 1310 870 1307 L808 1295 Q800 1292 802 1285Z M828 1251 A6 8 0 1 1 828 1250Z",
  "M960 1330 C960 1270 990 1240 1030 1243 C1075 1250 1090 1290 1070 1340 C1050 1395 1000 1400 975 1375 Q960 1360 960 1330Z M985 1310 L1020 1275 L1055 1285 L1050 1330 L1015 1360 L990 1345Z M985 1310 L960 1320 M1020 1275 L1015 1245 M1055 1285 L1072 1265 M1050 1330 L1072 1340 M1015 1360 L1010 1388 M990 1345 L970 1365 M1010 1243 L1015 1215 Q1025 1215 1025 1243 M1065 1265 L1085 1228 Q1105 1225 1100 1250 L1075 1285 M960 1290 L935 1290 Q935 1310 960 1310 M1075 1320 L1095 1325 Q1100 1345 1075 1340 M1005 1390 L1010 1422 Q1022 1425 1020 1390",
  "M1135 1190 C1110 1180 1110 1130 1120 1120 C1140 1130 1145 1160 1135 1190Z M1135 1190 C1130 1150 1150 1120 1165 1112 C1175 1150 1160 1180 1140 1195Z M1140 1195 C1150 1160 1180 1145 1192 1150 C1185 1190 1165 1200 1140 1195Z M1135 1190 C1130 1240 1140 1270 1155 1285 M1140 1230 C1110 1230 1105 1290 1120 1320 C1150 1355 1190 1335 1190 1290 C1190 1240 1165 1220 1140 1230Z",
  "M1270 1220 Q1268 1205 1285 1205 L1300 1200 Q1290 1170 1300 1167 C1350 1165 1360 1200 1370 1240 L1388 1320 Q1390 1335 1378 1340 L1290 1362 Q1280 1360 1278 1350Z M1310 1167 C1360 1190 1365 1230 1375 1330 M1320 1358 L1332 1400 Q1348 1408 1350 1390 L1342 1352 M1295 1255 l12 8 l-10 8 M1342 1240 l-12 8 l12 8 M1310 1300 L1340 1292 M1318 1300 q2 25 18 15 l0 -20",
  "M1451 1265 C1420 1260 1410 1275 1418 1300 C1430 1330 1400 1340 1408 1370 C1420 1385 1440 1380 1451 1395",
  "M95 1305 C80 1360 110 1420 165 1425 M88 1380 C90 1430 120 1430 118 1470 C100 1510 105 1530 110 1568 Q120 1590 145 1582 M168 1410 C180 1340 230 1320 270 1335 C310 1370 310 1430 290 1445 L218 1455 M168 1410 C175 1460 200 1475 215 1465 C230 1440 225 1380 205 1370 M228 1330 C250 1315 275 1330 280 1355 M262 1385 v4 M280 1365 v4 M278 1390 l10 -3 l-4 10Z M280 1415 q10 5 12 -10 M270 1450 C270 1480 260 1510 260 1535 L275 1550 Q285 1575 260 1575 H235 M142 1520 L145 1545 Q165 1550 160 1568 L178 1575 M142 1520 L205 1518 L220 1570 M240 1515 V1545 M260 1530 L265 1560",
  "M390 1398 Q388 1385 400 1382 L535 1320 Q545 1318 548 1328 L575 1460 Q575 1470 565 1475 L425 1520 Q415 1522 412 1510Z M405 1390 L535 1340 L558 1450 L425 1498Z M425 1495 L462 1415 L490 1440 L510 1420 L558 1450 M530 1377 A11 16 0 1 1 530 1376Z M465 1345 L500 1300 Q510 1300 522 1318 M555 1370 Q575 1385 578 1400 L570 1430 M395 1425 L385 1445 L405 1480 M435 1520 L460 1550 L520 1492",
  "M612 1470 C600 1420 610 1390 635 1372 L640 1275 Q650 1260 665 1270 L672 1355 L685 1275 Q700 1265 702 1280 L695 1385 C715 1420 710 1470 690 1482 C660 1490 620 1485 612 1470Z M635 1372 C615 1340 600 1350 602 1380 C610 1400 630 1400 635 1380 M640 1400 C640 1370 670 1370 692 1380 M645 1405 C660 1400 680 1400 678 1435",
  "M787 1370 A25 38 0 1 1 787 1369Z M730 1510 C725 1450 740 1415 762 1412 L772 1435 L788 1410 C815 1410 835 1440 840 1478Z",
  "M1090 1400 Q1088 1385 1102 1380 L1230 1342 Q1245 1338 1248 1352 L1278 1490 Q1278 1505 1262 1512 L1262 1555 L1225 1535 L1135 1560 Q1122 1562 1118 1548Z M1212 1455 A43 56 0 1 1 1212 1454Z M1140 1450 q10 -12 20 0 M1190 1440 A9 13 0 1 1 1190 1439Z M1150 1475 L1195 1468 C1195 1510 1160 1510 1150 1475Z M1165 1475 v18 M1180 1470 v20 M1225 1495 l8 10 l12 -30 M1240 1500 l18 -30",
  "M1335 1500 C1335 1480 1350 1490 1365 1500 C1390 1485 1410 1485 1425 1490 Q1440 1465 1451 1468 M1335 1500 C1335 1530 1345 1540 1350 1568 M1385 1545 A8 12 0 1 1 1385 1544Z M1433 1525 A8 12 0 1 1 1433 1524Z",
  "M932 1568 V1540 Q932 1527 945 1527 L1070 1525 Q1083 1525 1083 1540 V1568",
  "M82 315 Q95 330 95 385 L82 402 M82 550 q14 5 14 18 q0 15 -14 18 M82 935 C105 935 115 955 112 975 C108 1000 90 1010 82 1015 M82 1150 Q98 1145 102 1160 L122 1230 Q124 1240 115 1245 L82 1270",
  "M820 0 L825 95 L880 100 L985 55 L970 0 M828 50 L880 40 L940 0 M880 40 L950 15 L980 50",
  "M1140 0 C1130 60 1140 100 1180 125 C1240 150 1290 90 1275 0 M1168 0 C1175 60 1200 70 1215 70 C1240 65 1255 30 1252 0 M1205 45 C1210 10 1230 0 1245 5 C1245 35 1225 45 1205 45Z M1128 65 C1170 65 1205 90 1200 120 C1190 150 1140 130 1128 65Z M1290 100 C1280 60 1320 50 1345 80 C1350 110 1335 120 1325 100 C1320 75 1300 100 1305 130",
  "M1451 5 Q1435 5 1432 40 Q1435 80 1451 105",
];
const lowPaths = [
  "M296 125 L375 10 L410 0 L405 60 L330 140 Q318 145 296 125Z M314 98 L342 130 M322 88 L350 120 M375 10 L405 60",
  "M82 85 L262 108 Q275 112 274 128 L258 408 M82 120 L255 148 Q258 150 257 160 L242 375 L82 353 M82 385 L85 400 L165 412 L172 398 L303 420 C305 440 295 460 280 460 L82 432",
  "M90 285 L95 300 L88 318 L105 310 M108 215 C100 240 130 280 150 275 L148 258 L135 250 L128 258 C120 250 115 240 118 232 L122 222 L115 205 Q108 205 108 215Z",
  "M300 270 C295 190 350 180 390 188 C450 200 475 240 470 300 C465 360 455 420 465 460 C490 490 520 480 543 465 C540 500 520 560 470 562 Q450 560 438 548 C410 570 360 575 358 540 C355 510 380 490 405 515 M300 270 C305 320 340 335 370 332 C372 360 360 370 330 370 C305 370 305 400 320 405 L345 412 C340 440 330 460 330 480 L345 492 M330 485 C295 480 290 530 320 545 L360 545 M440 408 C410 380 370 370 370 400 C375 430 400 425 410 415 M322 278 L355 292 C350 315 325 320 322 278Z M334 236 A5 7 0 1 1 334 235Z M354 243 A5 7 0 1 1 354 242Z M410 260 Q425 255 428 272",
  "M395 188 L410 165 L425 195 L445 195 L448 220 L465 225 L465 248 L482 255 L470 275 L485 285 L472 300 L487 312 L472 325 L487 338 L472 350 L485 365 L470 378 L480 392 L468 405 L476 420 L464 432 L480 445 L485 470 L500 460 L510 478 L520 462 L530 475",
  "M553 235 Q553 220 562 215 L685 128 Q692 128 694 138 L733 285 Q733 295 725 300 L615 372 Q605 375 602 365Z M600 345 L715 205 M592 335 L710 195 M690 255 L730 295 M592 192 L650 365 M648 160 L700 325",
  "M1185 200 C1180 150 1190 125 1205 120 C1230 150 1220 180 1235 198 C1260 190 1250 160 1230 115 C1200 80 1210 90 1240 95 C1265 110 1270 120 1278 150 L1280 60 Q1290 40 1300 55 L1300 130 L1325 75 Q1338 75 1332 95 L1315 160 L1340 125 Q1355 125 1352 140 L1310 210 C1290 240 1270 260 1265 285 M1185 200 C1195 230 1205 250 1200 275 M1200 275 L1260 283 Q1272 287 1272 300 L1268 325 Q1265 337 1255 335 L1200 325 Q1188 322 1190 310Z",
  "M1345 0 C1335 60 1370 95 1400 95 C1430 95 1445 80 1451 65 M1372 10 v10 M1400 20 l15 -2 l-5 12Z M1395 40 q10 8 15 -8 q5 12 15 0 M1392 98 C1395 150 1420 150 1412 175 C1400 185 1405 200 1420 200 M1432 140 C1435 170 1430 190 1451 195",
  "M1275 385 C1290 340 1310 270 1330 240 C1350 215 1380 215 1395 245 C1410 265 1430 280 1451 275 M1275 385 C1265 440 1300 455 1320 440 C1340 410 1380 405 1420 425 C1430 470 1430 520 1451 522 M1420 300 L1430 310 L1415 350 L1408 342Z",
  "M1033 480 Q1033 460 1048 455 L1195 388 Q1215 383 1220 402 L1225 470 Q1225 488 1210 493 L1070 560 Q1052 568 1045 550Z M1075 565 Q1073 580 1085 580 L1205 530 Q1212 525 1208 512 M1168 393 L1170 382 L1180 380 L1183 390 M998 400 L1020 420 Q1025 425 1020 428 L1002 410Z M988 435 L1010 440 Q1012 448 1008 450 L988 446Z M990 472 L1012 462 Q1018 470 1012 474 L992 482Z",
  "M82 462 L104 466 L102 512 L82 508 M138 470 L168 475 L164 520 L134 514Z M102 512 L118 516 L115 532 L146 538 L140 602 L118 598 L120 570 L98 566 L96 595 L82 592",
  "M198 480 L235 498 L215 548 L210 520 C180 530 180 600 210 615 C250 620 265 560 242 530 L255 528 C280 590 240 645 205 630 C170 610 165 540 205 510Z",
  "M615 590 C650 595 670 640 688 700 C680 790 650 815 620 817 C570 815 550 780 540 740 C535 650 560 590 615 590Z M550 720 C555 670 590 650 612 685 C625 660 665 660 668 710 C665 740 655 745 655 770 C650 800 630 815 620 815 C590 812 585 780 585 755 C565 750 550 745 550 720Z M588 710 A8 14 0 1 1 588 709Z M645 688 A8 14 0 1 1 645 687Z M600 762 L640 755 C640 790 605 795 600 762Z M608 735 v5 M620 732 v5 M508 740 C505 680 520 640 530 638 C545 670 540 720 538 755 L525 755Z M525 755 L530 860 Q545 880 565 860 L540 750 M545 645 L535 655 M662 595 Q675 585 680 595 C700 630 710 670 705 695 L690 702 Q670 640 662 595Z M690 702 L692 800 Q705 825 728 810 Q732 790 705 697",
  "M780 800 Q778 788 790 783 L895 758 Q905 745 920 758 L1010 718 Q1022 715 1024 728 L1050 935 Q1050 948 1038 952 L945 985 Q935 990 925 985 L880 1004 M780 800 L820 1004 M790 800 L828 1004 M905 762 L942 975 M915 752 L1000 705 L1010 715 M825 855 L880 830 Q886 838 880 845 L830 862Z M965 785 L1008 766 Q1014 772 1010 780 L968 796Z M945 835 L1015 808 Q1020 815 1015 822 L948 848Z M950 878 L1018 850 Q1022 858 1018 864 L952 886Z M957 915 L995 898 Q1000 905 995 912 L960 926Z",
  "M1000 622 L1015 615 L1123 800 Q1122 815 1110 812Z M1015 615 L1028 605 L1035 625 L1042 635 L1050 630 L1065 670 L1055 680",
  "M1148 685 C1150 620 1180 590 1210 590 C1250 610 1255 660 1240 720 C1220 750 1180 740 1160 710 C1145 690 1140 680 1142 690 M1142 690 C1125 700 1115 735 1130 745 L1150 738 L1160 748 L1190 745 M1210 588 L1222 572 L1235 578 L1248 562 Q1255 590 1250 630",
  "M82 685 L160 673 Q170 673 172 685 L177 760 Q175 775 165 780 L82 798 M82 712 L125 703 Q130 710 126 718 L82 730 M82 750 L120 740 Q128 745 124 755 L82 765",
  "M82 832 L235 805 Q248 805 250 825 L252 862 L270 882 L250 898 Q248 908 238 912 L82 940 M88 865 L220 838 Q226 845 220 852 L92 878Z M92 898 L178 880 Q185 885 178 895 L95 912Z",
  "M425 825 Q430 815 442 820 L485 840 Q492 848 485 870 C470 920 450 960 445 1004 M425 825 L410 895 L390 1004 M432 835 l-2 18 M445 838 l-3 20 M460 845 l-4 18 M475 850 l-5 18 M412 895 Q440 885 468 925 M398 955 Q425 945 450 975",
  "M210 1004 L355 910 Q368 908 365 925 L355 1004",
  "M605 958 C640 930 620 870 655 850 L655 838 L690 828 L688 880 L672 872 C650 890 650 950 615 965Z M590 885 Q610 870 630 885 M592 895 L620 905 M655 905 L675 910 L678 895 L707 912 L692 942 L678 930 L655 930",
  "M1355 835 C1345 800 1360 770 1355 740 C1360 690 1385 680 1400 688 C1420 720 1415 750 1405 780 C1395 830 1370 870 1355 855Z M1352 775 L1380 738 L1405 800 M1275 830 C1265 790 1285 760 1305 770 C1335 800 1330 850 1340 890 C1350 930 1330 945 1318 930 C1300 900 1285 870 1275 830Z M1292 885 L1298 822 L1338 870",
  "M1140 1004 C1145 950 1180 930 1210 932 C1250 935 1275 970 1275 1004 M1185 1004 L1195 968 L1240 1004 M1410 1004 L1425 918 L1451 935 M1415 975 L1451 975",
  "M640 1000 L690 975 L725 1000 M762 1004 Q775 960 795 1000",
  "M1335 490 C1335 440 1360 425 1385 455 C1400 490 1380 510 1370 490 C1350 470 1345 490 1352 515Z M1445 610 Q1440 650 1451 670",
  "M933 150 V10 Q933 0 940 0 M1083 0 L1085 150 Q1083 162 1070 162 L1000 165 L965 208 L960 168 Q935 168 933 150",
  "M1115 0 L1130 25 L1240 0 L1265 20 M445 0 q15 20 30 0",
];

function DoodleBand({ band, items, dots, paths }: { band: Band; items: Item[]; dots: number[][]; paths: string[] }) {
  return (
    <>
      <g transform={`translate(${band.tx} ${band.ty}) scale(${band.sx} ${band.sy})`}>
        {paths.map((d, i) => (
          <path key={i} d={d} />
        ))}
      </g>
      {items.map(([shape, x, y, w, rot], i) => (
        <path
          key={i}
          d={shapes[shape]}
          transform={`translate(${x * band.sx + band.tx} ${y * band.sy + band.ty}) rotate(${rot}) scale(${(w * band.sx) / 100})`}
        />
      ))}
      {dots.map(([x, y, r], i) => (
        <circle key={i} cx={x * band.sx + band.tx} cy={y * band.sy + band.ty} r={r * band.sx} />
      ))}
    </>
  );
}

function Wallpaper() {
  return (
    <svg
      viewBox="0 0 783 1348"
      preserveAspectRatio="xMidYMin slice"
      className="absolute inset-0 h-full w-full [&_*]:[vector-effect:non-scaling-stroke]"
      fill="none"
      stroke="#212124"
      strokeWidth="2"
      strokeLinejoin="round"
      strokeLinecap="round"
      aria-hidden="true"
    >
      <DoodleBand band={TOP} items={topItems} dots={topDots} paths={topPaths} />
      <DoodleBand band={MID} items={midItems} dots={midDots} paths={midPaths} />
      <DoodleBand band={LOW} items={lowItems} dots={lowDots} paths={lowPaths} />
      <g fontFamily="Inter, 'Noto Sans CJK JP', sans-serif" fontWeight="700">
        <text x="500" y="998" fontSize="42">Hi</text>
        <text x="404" y="1087" fontSize="56" transform="rotate(-8 432 1066)">文</text>
        <text x="456" y="1107" fontSize="62" transform="rotate(-4 476 1084)">A</text>
        <text x="556" y="1162" fontSize="34" fontWeight="500" transform="rotate(-17 556 1162)">09:28</text>
        <text x="482" y="1275" fontSize="20" fontWeight="400" transform="rotate(-12 482 1275)">W</text>
      </g>
    </svg>
  );
}

function ChatScreen() {
  return (
    <Device screenClass="border-t border-[#d0d0d0] bg-[#171717]" indicatorClass="bg-white">
      <div className="flex h-[101px] items-center justify-between pl-[25px] pr-9 font-['Inter',sans-serif] text-white">
        <div className="flex h-full flex-col items-center gap-2 pt-[17px]">
          <span className="text-[33px] leading-9 font-semibold">8:17</span>
          <a href="#seek" className="flex items-center gap-2 text-[22px] leading-7 font-medium">
            <svg viewBox="0 0 15 14" className="h-[14px] w-[15px]" fill="currentColor" aria-hidden="true">
              <path d="M1 6 L13 .3 Q15 0 15 2 V12 Q15 14 13 13.7 L1 8 Q-.4 7 1 6Z" />
            </svg>
            SeekNYUAD
          </a>
        </div>
        <StatusIcons />
      </div>
      <header className="flex h-[82px] items-center border-b border-[#2e2e2e] pb-[6px] pl-[18px] pr-9 text-[#509cf8]">
        <button className="flex items-center gap-6 text-[32px] leading-9">
          <BackChevron />
          10
        </button>
        <h1 className="flex-1 pb-[6px] pl-[53px] text-[56px] leading-[60px] font-black text-white">Listener</h1>
        <div className="flex items-center gap-[46px]">
          <button aria-label="Video call">
            <svg viewBox="0 0 52 35" className="block h-[35px] w-[52px]" fill="none" stroke="currentColor" strokeWidth="3" strokeLinejoin="round" aria-hidden="true">
              <rect x="1.5" y="1.5" width="35.5" height="32" rx="6.5" />
              <path d="M37 15 L47 6.5 Q50.5 5 50.5 8.5 V26.5 Q50.5 30 47 28.5 L37 20" />
            </svg>
          </button>
          <button aria-label="Voice call">
            <Phone className="block h-[47px] w-[47px]" strokeWidth={1.6} />
          </button>
        </div>
      </header>
      <main className="relative flex flex-1 flex-col items-center gap-[26px] bg-gradient-to-b from-[#0e0e13] via-[#060608] to-[#020203] pt-6 font-['Inter',sans-serif]">
        <Wallpaper />
        <span className="relative rounded-[18px] bg-[#1b1b1c] px-5 py-[6px] text-[26px] leading-8 font-medium text-[#a8a8a8]">
          Today
        </span>
        <p className="relative w-[609px] rounded-[16px] bg-[#171717]/95 pb-[16px] pt-[12px] text-center text-[26px] leading-10 text-[#fae27d]">
          <svg viewBox="0 0 17 22" className="mr-3 inline-block h-[22px] w-[17px] align-[-1px]" fill="currentColor" aria-hidden="true">
            <rect x="0" y="9" width="17" height="13" rx="2.5" />
            <path d="M4 10 V6 Q4 1.2 8.5 1.2 T13 6 V10" fill="none" stroke="currentColor" strokeWidth="2.2" />
          </svg>
          Messages and calls are end-to-end
          <br />
          encrypted. No one outside of this chat, not
          <br />
          even WhatsApp, can read or listen to them.
          <br />
          Tap to learn more.
        </p>
      </main>
      <footer className="flex items-center border-t border-[#2e2e2e] pb-[81px] pl-7 pr-[34px] pt-[14px] text-[#509cf8]">
        <button aria-label="Attach">
          <svg viewBox="0 0 40 40" className="block h-[40px] w-[40px]" fill="none" stroke="currentColor" strokeWidth="3.5" strokeLinecap="round" aria-hidden="true">
            <path d="M20 2 V38 M2 20 H38" />
          </svg>
        </button>
        <div className="ml-[27px] mr-[38px] flex h-[66px] min-w-0 flex-1 items-center rounded-full border border-[#414143] bg-[#2c2c2e] pl-6 pr-[22px]">
          <input aria-label="Message" className="min-w-0 flex-1 bg-transparent text-[28px] text-white outline-none" />
          <button aria-label="Stickers">
            <svg viewBox="0 0 38 38" className="block h-[38px] w-[38px]" fill="none" stroke="currentColor" strokeWidth="2.8" strokeLinejoin="round" aria-hidden="true">
              <path d="M20 36.5 H14 C5 36.5 1.5 32 1.5 24 V14 C1.5 5.5 5.5 1.5 14 1.5 H24 C32.5 1.5 36.5 5.5 36.5 14 V20 C36.5 26 26 36.5 20 36.5Z" />
              <path d="M20.5 36 C21 33 20 30 21.5 26.5 Q23.5 21.5 29 21 L36 20.5" />
            </svg>
          </button>
        </div>
        <div className="flex items-center gap-10">
          <button aria-label="Camera">
            <svg viewBox="0 0 45 39" className="block h-[39px] w-[45px]" fill="none" stroke="currentColor" strokeWidth="3" strokeLinejoin="round" aria-hidden="true">
              <path d="M1.5 14 Q1.5 6.5 8.5 6.5 Q12 6.5 13.5 4.5 Q15.5 1.5 19 1.5 H26 Q29.5 1.5 31.5 4.5 Q33 6.5 36.5 6.5 Q43.5 6.5 43.5 14 V29 Q43.5 37.5 35 37.5 H10 Q1.5 37.5 1.5 29Z" />
              <circle cx="22.5" cy="20.5" r="9" />
            </svg>
          </button>
          <button aria-label="Voice message">
            <svg viewBox="0 0 32 46" className="block h-[46px] w-[32px]" fill="none" stroke="currentColor" strokeWidth="3" strokeLinecap="round" aria-hidden="true">
              <rect x="8.5" y="1.5" width="15" height="30" rx="7.5" />
              <path d="M1.5 23 C1.5 32 8 38 16 38 S30.5 32 30.5 23 M16 38 V44.5" />
            </svg>
          </button>
        </div>
      </footer>
    </Device>
  );
}

export default function App() {
  return (
    <div className="grid min-h-screen grid-cols-4 gap-[157px] bg-white pb-[79px] pl-[78px] pr-[79px] pt-[78px] font-['Lato',sans-serif] [font-variant-ligatures:none]">
      <ListScreen />
      <DetailScreen />
      <ContactScreen />
      <ChatScreen />
    </div>
  );
}
